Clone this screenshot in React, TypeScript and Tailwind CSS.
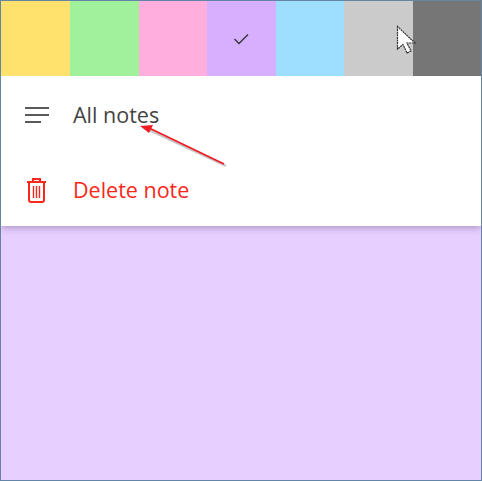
export default function App() {
  const swatches = [
    "w-[69px] bg-[#ffe16e]",
    "w-[69px] bg-[#a1f09c]",
    "w-[68px] bg-[#ffaede]",
    "w-[69px] bg-[#d6afff]",
    "w-[68px] bg-[#9edfff]",
    "w-[69px] bg-[#cbcbcb]",
    "w-[68px] bg-[#767676]",
  ];
  return (
    <div className="relative w-[482px] h-[481px] overflow-hidden border border-[#6585a6] bg-[#e7d0ff] font-['Open_Sans','Noto_Sans',sans-serif]">
      <div className="flex h-[75px]">
        {swatches.map((c, i) => (
          <div key={c} className={`flex items-center justify-center ${c}`}>
            {i === 3 && (
              <svg width="18" height="14" viewBox="0 0 18 14" fill="none" stroke="#333" strokeWidth="1.3" className="-ml-[2px]">
                <path d="M2.5 7 L7 11.5 L16 2.5" />
              </svg>
            )}
          </div>
        ))}
      </div>
      <div className="bg-white h-[150px] shadow-[0_2px_7px_rgba(90,60,120,0.4)] pt-[1px]">
        <div className="flex items-center h-[75px] pl-[24px]">
          <svg width="25" height="18" viewBox="0 0 25 18" fill="none" stroke="#5a5a5a" strokeWidth="2" className="shrink-0">
            <path d="M0 2 H24 M0 9 H24 M0 16 H16" />
          </svg>
          <span className="ml-[23px] text-[21.5px] leading-none text-[#444444]">All notes</span>
        </div>
        <div className="flex items-center h-[75px] pl-[25px]">
          <svg width="21" height="26" viewBox="0 0 21 26" fill="none" stroke="#f8281a" strokeWidth="2" className="shrink-0">
            <path d="M1 5 H20 M7 5 V2 H14 V5 M3 5 V23 Q3 25 5 25 H16 Q18 25 18 23 V5" />
            <path d="M7.5 9 V21 M10.5 9 V21 M13.5 9 V21" strokeWidth="1.4" />
          </svg>
          <span className="ml-[26px] text-[21.5px] leading-none text-[#f8281a]">Delete note</span>
        </div>
      </div>
      <svg className="absolute left-[130px] top-[118px]" width="110" height="55" viewBox="130 119 110 55" fill="none">
        <path d="M148 130 L225 166" stroke="#c4c4c4" strokeWidth="2" />
        <path d="M146 127 L223 164" stroke="#ee1c25" strokeWidth="1.8" />
        <path d="M139 126 L152 125 L148 133 Z" fill="#ee1c25" />
      </svg>
      <svg className="absolute left-[395px] top-[24px]" width="22" height="30" viewBox="0 0 22 30">
        <path d="M1.5 1.5 V24 L7 19.5 L11 28 L15 26 L11 18 L19 18 Z" fill="#fff" stroke="#333" strokeWidth="1.2" strokeDasharray="2 0.6" />
      </svg>
    </div>
  );
}
